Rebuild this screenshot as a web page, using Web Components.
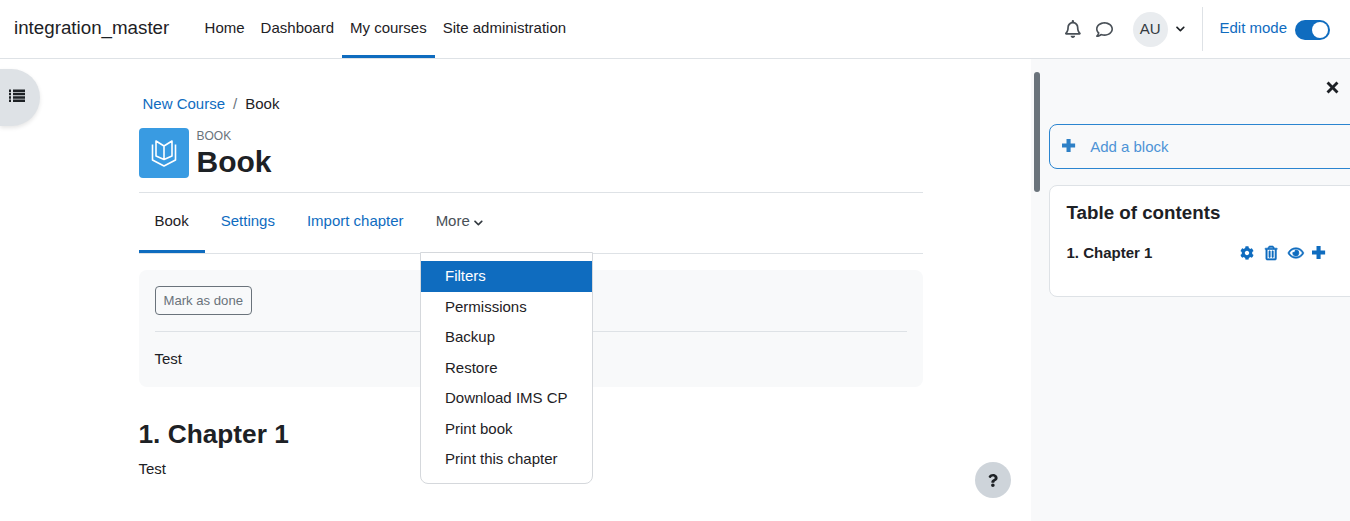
<!DOCTYPE html>
<html lang="en">
<head>
<meta charset="utf-8">
<title>Book</title>
<style>
  html, body { margin: 0; height: 521px; overflow: hidden; background: #fff; }
  body { font: 15px/22.5px "Liberation Sans", Arial, sans-serif; color: #1d2125; }
  mdl-app { display: block; }
</style>
</head>
<body>
<mdl-app></mdl-app>
<script>
// icon paths, all on a 512 tall grid
const ICONS = {
  bell: [448, 'M439.39 362.29c-19.32-20.76-55.47-51.99-55.47-154.29 0-77.7-54.48-139.9-127.94-155.16V32c0-17.67-14.32-32-31.98-32s-31.98 14.33-31.98 32v20.84C118.56 68.1 64.08 130.3 64.08 208c0 102.3-36.15 133.53-55.47 154.29-6 6.45-8.66 14.16-8.61 21.71.11 16.4 12.98 32 32.1 32h383.8c19.12 0 32-15.6 32.1-32 .05-7.55-2.61-15.27-8.61-21.71zM67.53 368c21.22-27.97 44.42-74.33 44.53-159.42 0-.2-.06-.38-.06-.58 0-61.86 50.14-112 112-112s112 50.14 112 112c0 .2-.06.38-.06.58.11 85.1 23.31 131.46 44.53 159.42H67.53zM224 512c35.32 0 63.97-28.65 63.97-64H160.03c0 35.35 28.65 64 63.97 64z'],
  comment: [512, 'M256 32C114.6 32 0 125.1 0 240c0 47.6 19.9 91.2 52.9 126.3C38 405.7 7 439.1 6.5 439.5c-6.6 7-8.4 17.2-4.6 26S14.4 480 24 480c61.5 0 110-25.7 139.1-46.3C192 442.8 223.2 448 256 448c141.4 0 256-93.1 256-208S397.4 32 256 32zm0 368c-26.7 0-53.1-4.1-78.4-12.1l-22.7-7.2-19.5 13.8c-14.3 10.1-33.9 21.4-57.5 29 7.3-12.1 14.4-25.7 19.9-40.2l10.6-28.1-20.6-21.8C69.7 314.1 48 282.2 48 240c0-88.2 93.3-160 208-160s208 71.8 208 160-93.3 160-208 160z'],
  chevron: [448, 'M207.029 381.476L12.686 187.132c-9.373-9.373-9.373-24.569 0-33.941l22.667-22.667c9.357-9.357 24.522-9.375 33.901-.04L224 284.505l154.745-154.021c9.379-9.335 24.544-9.317 33.901.04l22.667 22.667c9.373 9.373 9.373 24.569 0 33.941L240.971 381.476c-9.373 9.372-24.569 9.372-33.942 0z'],
  times: [512, 'M100 20L256 176 412 20l80 80-156 156 156 156-80 80-156-156-156 156-80-80 156-156L20 100z'],
  plus: [448, 'M154 32H294V186H448V326H294V480H154V326H0V186H154Z'],
  cog: [512, 'M487.4 315.7l-42.6-24.6c4.3-23.2 4.3-47 0-70.2l42.6-24.6c4.9-2.8 7.1-8.6 5.5-14-11.1-35.6-30-67.8-54.7-94.6-3.8-4.1-10-5.1-14.8-2.3L380.8 110c-17.9-15.4-38.5-27.3-60.8-35.1V25.8c0-5.6-3.9-10.5-9.4-11.7-36.7-8.2-74.3-7.8-109.2 0-5.5 1.2-9.4 6.1-9.4 11.7V75c-22.2 7.9-42.8 19.8-60.8 35.1L88.7 85.5c-4.9-2.8-11-1.9-14.8 2.3-24.7 26.7-43.6 58.9-54.7 94.6-1.7 5.4.6 11.2 5.5 14L67.3 221c-4.3 23.2-4.3 47 0 70.2l-42.6 24.6c-4.9 2.8-7.1 8.6-5.5 14 11.1 35.6 30 67.8 54.7 94.6 3.8 4.1 10 5.1 14.8 2.3l42.6-24.6c17.9 15.4 38.5 27.3 60.8 35.1v49.2c0 5.6 3.9 10.5 9.4 11.7 36.7 8.2 74.3 7.8 109.2 0 5.5-1.2 9.4-6.1 9.4-11.7v-49.2c22.2-7.9 42.8-19.8 60.8-35.1l42.6 24.6c4.9 2.8 11 1.9 14.8-2.3 24.7-26.7 43.6-58.9 54.7-94.6 1.5-5.5-.7-11.3-5.6-14.1zM256 336c-44.1 0-80-35.9-80-80s35.9-80 80-80 80 35.9 80 80-35.9 80-80 80z'],
  trash: [448, 'M268 416h24a12 12 0 0 0 12-12V188a12 12 0 0 0-12-12h-24a12 12 0 0 0-12 12v216a12 12 0 0 0 12 12zM432 80h-82.41l-34-56.7A48 48 0 0 0 274.41 0H173.59a48 48 0 0 0-41.16 23.3L98.41 80H16A16 16 0 0 0 0 96v16a16 16 0 0 0 16 16h16v336a48 48 0 0 0 48 48h288a48 48 0 0 0 48-48V128h16a16 16 0 0 0 16-16V96a16 16 0 0 0-16-16zM171.84 50.91A6 6 0 0 1 177 48h94a6 6 0 0 1 5.15 2.91L293.61 80H154.39zM368 464H80V128h288zm-212-48h24a12 12 0 0 0 12-12V188a12 12 0 0 0-12-12h-24a12 12 0 0 0-12 12v216a12 12 0 0 0 12 12z'],
  eye: [576, 'M288 144a110.94 110.94 0 0 0-31.24 5 55.4 55.4 0 0 1 7.24 27 56 56 0 0 1-56 56 55.4 55.4 0 0 1-27-7.24A111.71 111.71 0 1 0 288 144zm284.52 97.4C518.29 135.59 410.93 64 288 64S57.68 135.64 3.48 241.41a32.35 32.35 0 0 0 0 29.19C57.71 376.41 165.07 448 288 448s230.32-71.64 284.52-177.41a32.35 32.35 0 0 0 0-29.19zM288 400c-98.65 0-189.09-55-237.93-144C98.91 167 189.34 112 288 112s189.09 55 237.93 144C477.1 345 386.66 400 288 400z'],
  question: [384, 'M202.021 0C122.202 0 70.503 32.703 29.914 91.026c-7.363 10.58-5.093 25.086 5.178 32.874l43.138 32.709c10.373 7.865 25.132 6.026 33.253-4.148 25.049-31.381 43.63-49.449 82.757-49.449 30.764 0 68.816 19.799 68.816 49.631 0 22.552-18.617 34.134-48.993 51.164-35.423 19.86-82.299 44.576-82.299 106.405V320c0 13.255 10.745 24 24 24h72.471c13.255 0 24-10.745 24-24v-5.773c0-42.86 125.268-44.645 125.268-160.627C377.504 66.256 286.902 0 202.021 0zM192 373.459c-38.196 0-69.271 31.075-69.271 69.271 0 38.195 31.075 69.27 69.271 69.27s69.271-31.075 69.271-69.271-31.075-69.27-69.271-69.27z'],
  list: [512, 'M0 48h64v80H0zM0 155h64v80H0zM0 262h64v80H0zM0 369h64v80H0zM128 48h384v80H128zM128 155h384v80H128zM128 262h384v80H128zM128 369h384v80H128z']
};

class MdlIcon extends HTMLElement {
  connectedCallback() {
    const [w, d] = ICONS[this.getAttribute('name')];
    const h = this.getAttribute('size') || 16;
    const bold = this.hasAttribute('bold') ? 'stroke:currentColor; stroke-width:22;' : '';
    this.attachShadow({ mode: 'open' }).innerHTML = `
      <style>:host { display:inline-flex; flex:none; line-height:0; } svg { height:${h}px; width:${h * w / 512}px; fill:currentColor; overflow:visible; ${bold} }</style>
      <svg viewBox="0 0 ${w} 512"><path d="${d}"/></svg>`;
  }
}

class MdlNavbar extends HTMLElement {
  constructor() {
    super();
    this.attachShadow({ mode: 'open' }).innerHTML = `
      <style>
        :host { display:flex; align-items:stretch; height:58px; border-bottom:1px solid #dee2e6; background:#fff; padding-left:14px; padding-right:20px; }
        a { color:inherit; text-decoration:none; }
        .brand { align-self:center; font-size:18.75px; margin-right:27.3px; position:relative; top:-1px; }
        nav { display:flex; }
        nav a { display:flex; align-items:center; box-sizing:border-box; padding:2px 8px 0; height:58px; border-bottom:3px solid transparent; }
        nav a.on { border-bottom-color:#0f6cbf; }
        .right { margin-left:auto; display:flex; align-items:center; }
        .bell { color:#495057; margin-right:15px; }
        .msg { color:#495057; margin-right:20px; }
        .avatar { width:35px; height:35px; border-radius:50%; background:#e9ecef; display:flex; align-items:center; justify-content:center; color:#343a40; }
        .caret { margin:0 18px 0 8px; color:#1d2125; }
        .edit { height:44px; border-left:1px solid #dee2e6; display:flex; align-items:center; padding-left:16px; color:#0f6cbf; }
        .edit span { margin-top:-2px; }
        .toggle { width:35px; height:20px; border-radius:10px; background:#0f6cbf; margin-left:8px; position:relative; top:1px; }
        .toggle::after { content:""; position:absolute; right:2px; top:2px; width:16px; height:16px; border-radius:50%; background:#fff; }
      </style>
      <a class="brand" href="#">integration_master</a>
      <nav>
        <a href="#">Home</a><a href="#">Dashboard</a><a class="on" href="#">My courses</a><a href="#">Site administration</a>
      </nav>
      <div class="right">
        <mdl-icon class="bell" name="bell" size="18"></mdl-icon>
        <mdl-icon class="msg" name="comment" size="17"></mdl-icon>
        <div class="avatar">AU</div>
        <mdl-icon class="caret" name="chevron" size="10"></mdl-icon>
        <div class="edit"><span>Edit mode</span><div class="toggle"></div></div>
      </div>`;
  }
}

class MdlDrawerToggle extends HTMLElement {
  constructor() {
    super();
    this.attachShadow({ mode: 'open' }).innerHTML = `
      <style>
        :host { position:absolute; left:0; top:69px; width:40px; height:57px; border-radius:0 28.5px 28.5px 0; background:#dee2e6; box-shadow:0 2px 4px rgba(0,0,0,.1); display:flex; align-items:center; justify-content:flex-start; padding-left:9px; box-sizing:border-box; color:#1d2125; padding-bottom:3px; }
      </style>
      <mdl-icon name="list" size="16"></mdl-icon>`;
  }
}

class MdlPageHeader extends HTMLElement {
  constructor() {
    super();
    this.attachShadow({ mode: 'open' }).innerHTML = `
      <style>
        :host { display:block; }
        .crumbs { padding-left:4px; height:23px; color:#6a737b; padding-top:1px; margin-bottom:12px; display:flex; }
        .crumbs a { color:#0f6cbf; text-decoration:none; }
        .crumbs i { font-style:normal; margin:0 8px; }
        .crumbs b { font-weight:400; color:#1d2125; }
        .row { display:flex; height:50px; }
        .icon { width:50px; height:50px; border-radius:4px; background:#399be2; display:flex; align-items:center; justify-content:center; margin-right:8px; }
        .kind { font-size:12px; line-height:16px; color:#6a737b; }
        h1 { margin:0; font-size:30px; line-height:36px; font-weight:700; }
      </style>
      <div class="crumbs"><a href="#">New Course</a><i>/</i><b>Book</b></div>
      <div class="row">
        <div class="icon">
          <svg width="38" height="36" viewBox="0 0 38 36" fill="none" stroke="#fff" stroke-width="1.6" stroke-linejoin="round">
            <path d="M7.500 9.500V25L19 31l11.500-6V9.500"/>
            <path d="M11 6v15l8 3.500 8-3.500V6l-8 5zM19 11v13.500"/>
          </svg>
        </div>
        <div><div class="kind">BOOK</div><h1>Book</h1></div>
      </div>`;
  }
}

class MdlTabs extends HTMLElement {
  constructor() {
    super();
    this.attachShadow({ mode: 'open' }).innerHTML = `
      <style>
        :host { display:flex; position:relative; height:60px; margin-top:14px; border-top:1px solid #dee2e6; border-bottom:1px solid #dee2e6; }
        a { color:#0f6cbf; text-decoration:none; padding:0 16px; display:flex; align-items:center; height:57px; border-bottom:3px solid transparent; }
        a.on { color:#1d2125; border-bottom-color:#0f6cbf; }
        a.more { color:#495057; }
        a.more mdl-icon { margin-left:4px; margin-top:2px; color:#343a40; }
      </style>
      <a class="on" href="#">Book</a><a href="#">Settings</a><a href="#">Import chapter</a>
      <a class="more" href="#">More<mdl-icon name="chevron" size="10"></mdl-icon></a>
      <slot></slot>`;
  }
}

class MdlDropdown extends HTMLElement {
  constructor() {
    super();
    this.attachShadow({ mode: 'open' }).innerHTML = `
      <style>
        :host { position:absolute; left:281.5px; top:59px; width:171px; padding:8px 0; background:#fff; border:1px solid #d5d8dc; border-radius:0 0 8px 8px; z-index:5; display:block; }
      </style>
      <slot></slot>`;
  }
}

class MdlDropdownItem extends HTMLElement {
  constructor() {
    super();
    this.attachShadow({ mode: 'open' }).innerHTML = `
      <style>
        :host { display:block; padding:4px 24px; color:#1d2125; height:22.5px; }
        :host([active]) { background:#0f6cbf; color:#fff; }
      </style>
      <slot></slot>`;
  }
}

class MdlCompletionCard extends HTMLElement {
  constructor() {
    super();
    this.attachShadow({ mode: 'open' }).innerHTML = `
      <style>
        :host { display:block; margin-top:16px; padding:16px; background:#f8f9fa; border-radius:8px; height:85px; }
        button { font:13.13px/19.7px "Liberation Sans", Arial, sans-serif; color:#6a737b; background:transparent; border:1px solid #6a737b; border-radius:4px; padding:4px 8px; height:29px; display:block; }
        hr { border:0; border-top:1px solid #dee2e6; margin:16px 0 16px; }
      </style>
      <button>Mark as done</button>
      <hr>
      <div><slot></slot></div>`;
  }
}

class MdlChapter extends HTMLElement {
  constructor() {
    super();
    this.attachShadow({ mode: 'open' }).innerHTML = `
      <style>
        :host { display:block; margin-top:30px; }
        h2 { margin:0 0 6px; font-size:26.25px; line-height:35px; font-weight:700; }
      </style>
      <h2><slot name="title"></slot></h2>
      <slot></slot>`;
  }
}

class MdlBlockDrawer extends HTMLElement {
  constructor() {
    super();
    this.attachShadow({ mode: 'open' }).innerHTML = `
      <style>
        :host { display:block; width:319px; background:#f8f9fa; position:relative; overflow:hidden; box-sizing:border-box; padding:28px 0 0 18px; }
        .close { display:flex; justify-content:flex-end; height:37px; padding-right:11px; color:#1d2125; box-sizing:border-box; }
        .close mdl-icon { margin-top:-6px; }
        .add { margin-top:0; width:320px; height:45px; box-sizing:border-box; border:1px solid #2b85d0; border-radius:8px; display:flex; align-items:center; padding:1px 0 0 12px; color:#4d93d6; }
        .add mdl-icon { color:#2e80c6; margin-right:15px; margin-top:-3px; }
        .block { margin-top:16px; width:320px; height:112px; box-sizing:border-box; border:1px solid #dee2e6; border-radius:8px; background:#fff; padding:15px 16.5px; }
        h5 { margin:0; font-size:18.75px; line-height:23px; font-weight:700; }
        .row { margin-top:18px; display:flex; align-items:center; font-weight:700; width:259px; height:22px; }
        .tools { margin-left:auto; display:flex; align-items:center; color:#0f6cbf; margin-top:-1px; }
        .tools .c { margin-right:11px; }
        .tools .t { margin-right:10px; }
        .tools .e { margin-right:9px; }
        .scroll { position:absolute; left:3px; top:13px; width:6px; height:120px; border-radius:3px; background:#6a737b; }
      </style>
      <div class="scroll"></div>
      <div class="close"><mdl-icon name="times" size="13"></mdl-icon></div>
      <div class="add"><mdl-icon name="plus" size="15"></mdl-icon>Add a block</div>
      <div class="block">
        <h5>Table of contents</h5>
        <div class="row">
          <span>1. Chapter 1</span>
          <div class="tools">
            <mdl-icon class="c" name="cog" size="14"></mdl-icon>
            <mdl-icon class="t" name="trash" size="14" bold></mdl-icon>
            <mdl-icon class="e" name="eye" size="14" bold></mdl-icon>
            <mdl-icon name="plus" size="15"></mdl-icon>
          </div>
        </div>
      </div>`;
  }
}

class MdlHelpButton extends HTMLElement {
  constructor() {
    super();
    this.attachShadow({ mode: 'open' }).innerHTML = `
      <style>
        :host { position:absolute; left:975px; top:462px; width:36px; height:36px; border-radius:50%; background:#ced4da; display:flex; align-items:center; justify-content:center; color:#1d2125; }
      </style>
      <mdl-icon name="question" size="13"></mdl-icon>`;
  }
}

class MdlApp extends HTMLElement {
  constructor() {
    super();
    this.attachShadow({ mode: 'open' }).innerHTML = `
      <style>
        :host { display:block; position:relative; height:521px; overflow:hidden; }
        .page { display:flex; height:462px; }
        main { flex:1; min-width:0; padding:33px 108px 0 138.5px; }
      </style>
      <mdl-navbar></mdl-navbar>
      <mdl-drawer-toggle></mdl-drawer-toggle>
      <div class="page">
        <main>
          <mdl-page-header></mdl-page-header>
          <mdl-tabs>
            <mdl-dropdown>
              <mdl-dropdown-item active>Filters</mdl-dropdown-item>
              <mdl-dropdown-item>Permissions</mdl-dropdown-item>
              <mdl-dropdown-item>Backup</mdl-dropdown-item>
              <mdl-dropdown-item>Restore</mdl-dropdown-item>
              <mdl-dropdown-item>Download IMS CP</mdl-dropdown-item>
              <mdl-dropdown-item>Print book</mdl-dropdown-item>
              <mdl-dropdown-item>Print this chapter</mdl-dropdown-item>
            </mdl-dropdown>
          </mdl-tabs>
          <mdl-completion-card>Test</mdl-completion-card>
          <mdl-chapter><span slot="title">1. Chapter 1</span>Test</mdl-chapter>
        </main>
        <mdl-block-drawer></mdl-block-drawer>
      </div>
      <mdl-help-button></mdl-help-button>`;
  }
}

customElements.define('mdl-icon', MdlIcon);
customElements.define('mdl-navbar', MdlNavbar);
customElements.define('mdl-drawer-toggle', MdlDrawerToggle);
customElements.define('mdl-page-header', MdlPageHeader);
customElements.define('mdl-tabs', MdlTabs);
customElements.define('mdl-dropdown', MdlDropdown);
customElements.define('mdl-dropdown-item', MdlDropdownItem);
customElements.define('mdl-completion-card', MdlCompletionCard);
customElements.define('mdl-chapter', MdlChapter);
customElements.define('mdl-block-drawer', MdlBlockDrawer);
customElements.define('mdl-help-button', MdlHelpButton);
customElements.define('mdl-app', MdlApp);
</script>
</body>
</html>
